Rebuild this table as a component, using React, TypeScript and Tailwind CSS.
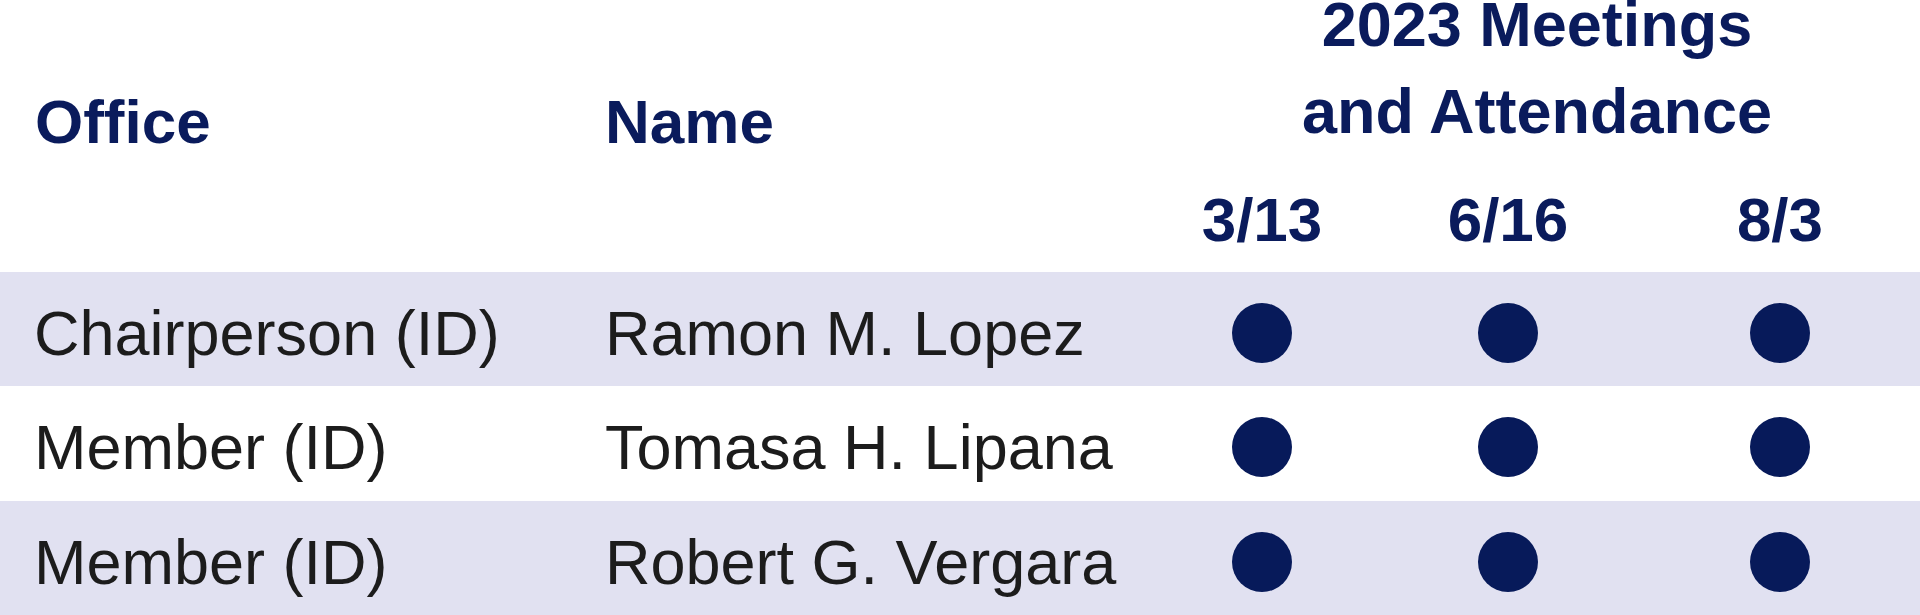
import React from "react";

const navy = "text-[#0a1b5c]";

const dates = ["3/13", "6/16", "8/3"];

const members = [
  { office: "Chairperson (ID)", name: "Ramon M. Lopez", shaded: true },
  { office: "Member (ID)", name: "Tomasa H. Lipana", shaded: false },
  { office: "Member (ID)", name: "Robert G. Vergara", shaded: true },
];

const Dot: React.FC = () => (
  <span className="block w-[60px] h-[60px] rounded-full bg-[#071a5a]" />
);

const App: React.FC = () => {
  return (
    <div
      className="w-[1920px] h-[615px] overflow-hidden bg-white flex flex-col text-[62px]"
      style={{ fontFamily: '"Liberation Sans", Arial, sans-serif' }}
    >
      {/* Header */}
      <div className="flex h-[272px] shrink-0">
        <div className={`w-[605px] pl-[35px] pt-[86px] leading-[72px] font-bold ${navy}`}>
          Office
        </div>
        <div className={`w-[535px] pt-[86px] leading-[72px] font-bold ${navy}`}>
          Name
        </div>
        <div className={`flex-1 flex flex-col font-bold ${navy}`}>
          <div className="pl-[14px] text-center text-[63px]">
            <div className="leading-[48px]">2023 Meetings</div>
            <div className="mt-[39px] leading-[48px]">and Attendance</div>
          </div>
          <div className="mt-[49px] grid grid-cols-[244px_248px_288px] leading-[72px] text-center">
            {dates.map((d, i) => (
              <div key={d} className={i === 2 ? "pl-[8px]" : ""}>
                {d}
              </div>
            ))}
          </div>
        </div>
      </div>

      {/* Rows */}
      {members.map((m, idx) => (
        <div
          key={idx}
          className={`flex flex-1 items-center pt-[8px] leading-[72px] text-[63px] text-[#1c1c1c] ${
            m.shaded ? "bg-[#e1e1f1]" : "bg-white"
          }`}
        >
          <div className="w-[605px] pl-[34px]">{m.office}</div>
          <div className="w-[535px]">{m.name}</div>
          <div className="flex-1 grid grid-cols-[244px_248px_288px]">
            {dates.map((d, i) => (
              <div
                key={d}
                className={`flex justify-center ${i === 2 ? "pl-[8px]" : ""}`}
              >
                <Dot />
              </div>
            ))}
          </div>
        </div>
      ))}
    </div>
  );
};

export default App;
